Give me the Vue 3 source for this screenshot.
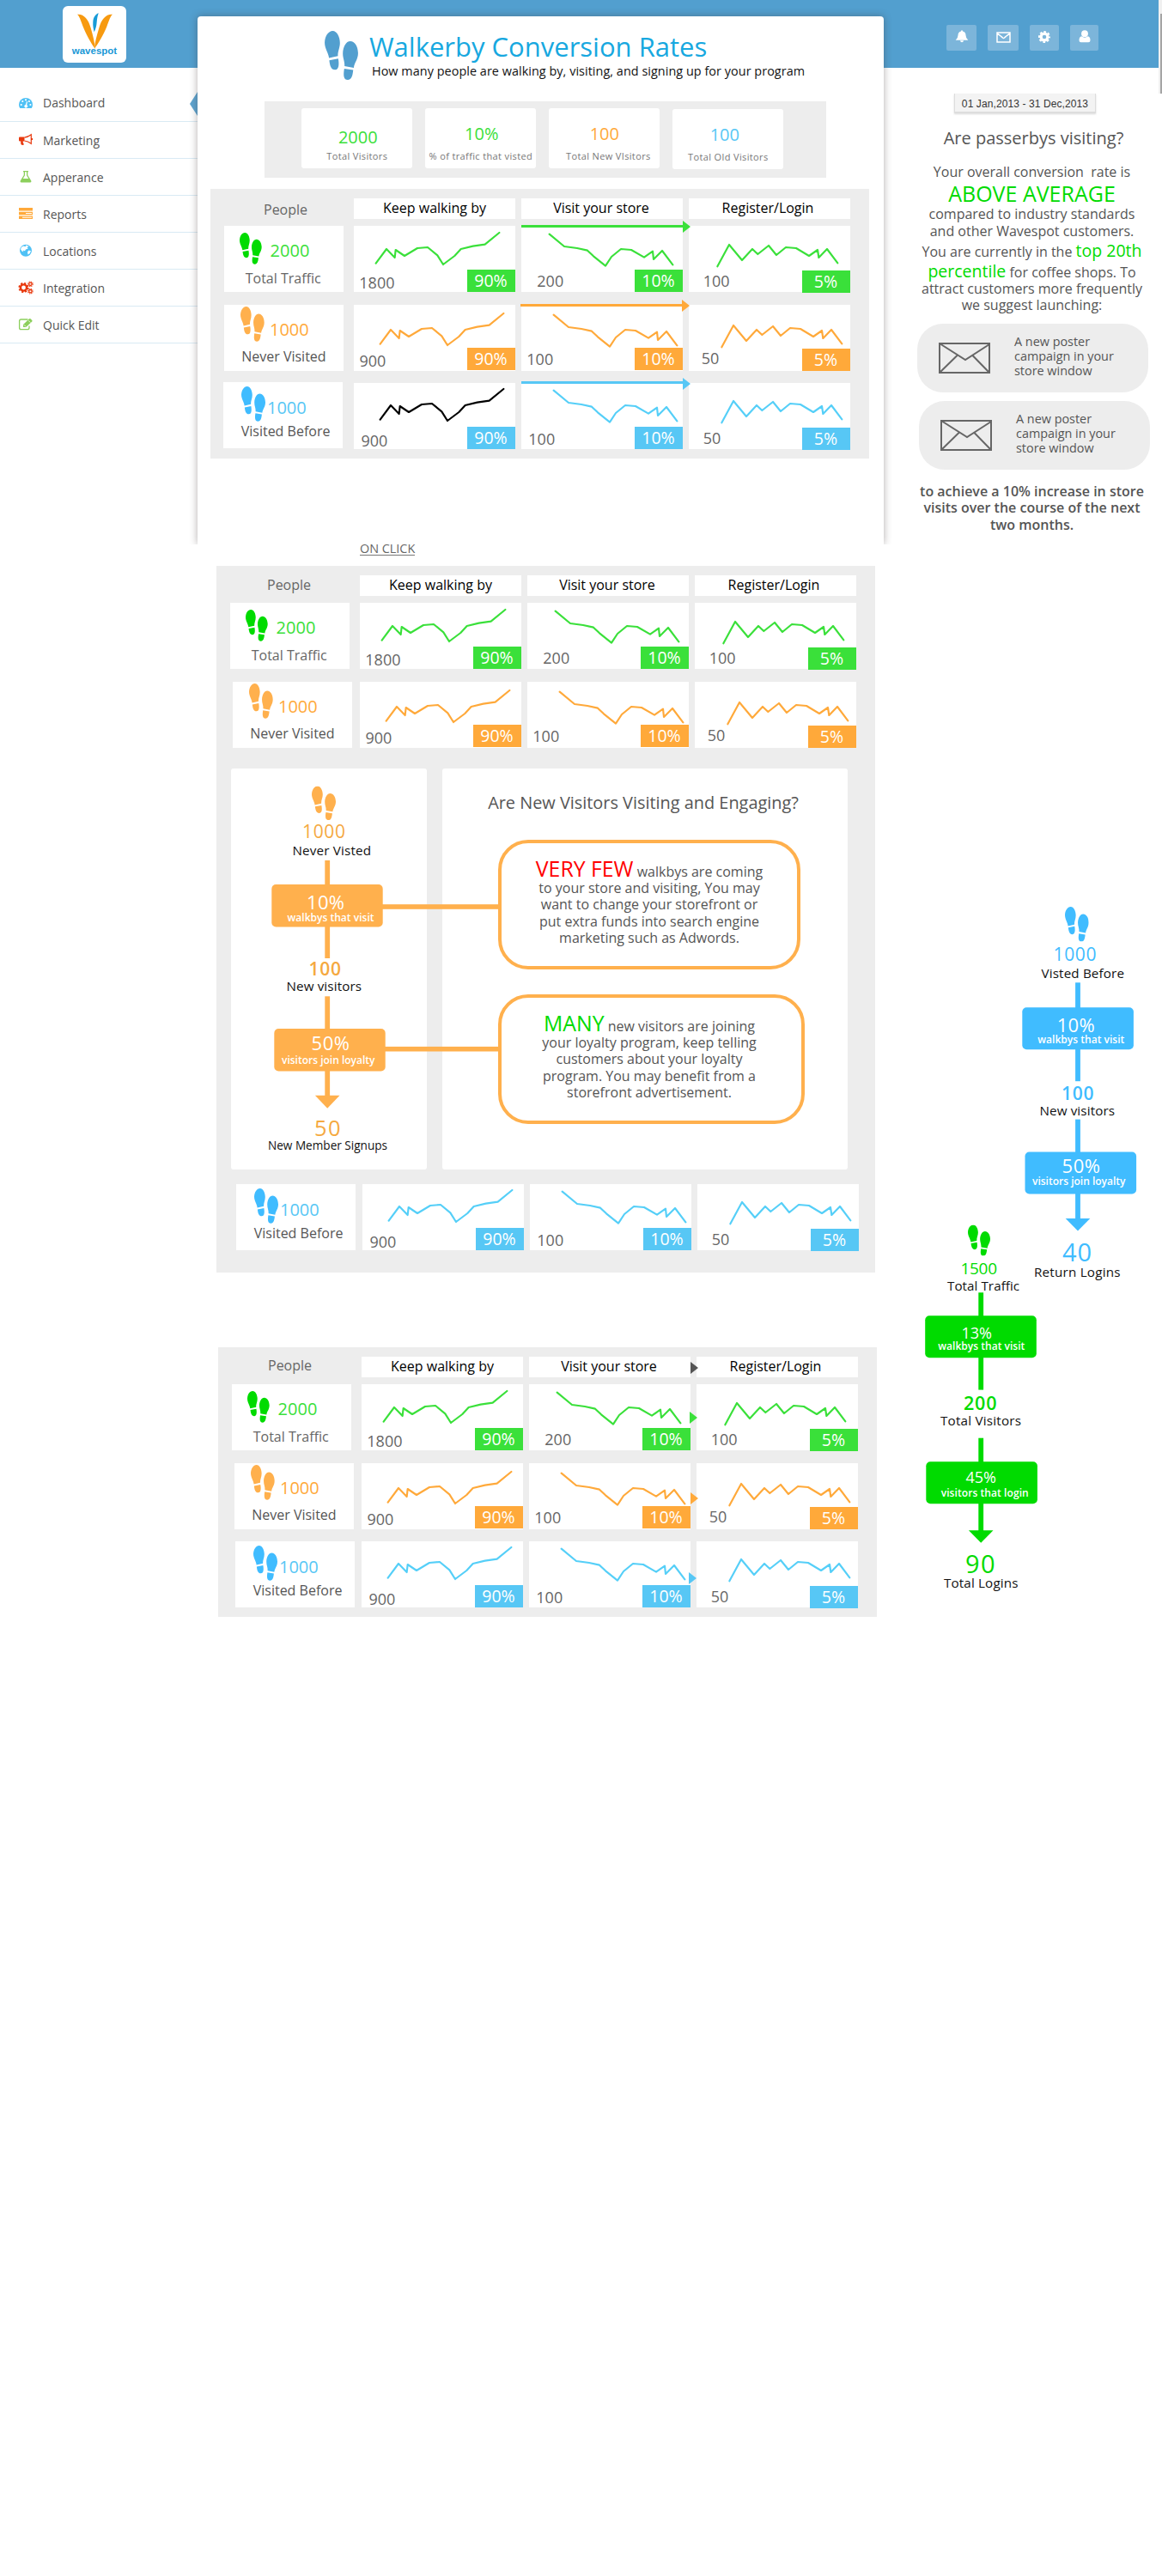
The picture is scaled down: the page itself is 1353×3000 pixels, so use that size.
<script setup>
const px = (n) => n + 'px'

const feetPath =
  'M28 0C42 0 53 20 53 42C53 60 45 70 46 87L15 94C13 75 0 62 0 40C1 18 12 1 28 0Z' +
  'M16 102L47 96C50 112 51 135 36 135C22 135 18 120 16 102Z' +
  'M89 36C104 37 115 52 116 77C116 100 103 110 101 128L69 122C70 105 63 96 63 78C64 55 74 36 89 36Z' +
  'M68 131L99 136C97 155 94 170 80 170C66 170 64 155 68 131Z'

const nav = [
  { label: 'Dashboard', icon: 'dash', color: '#4fc1f5' },
  { label: 'Marketing', icon: 'horn', color: '#e8380d' },
  { label: 'Apperance', icon: 'flask', color: '#8ccf5c' },
  { label: 'Reports', icon: 'tasks', color: '#ffa93a' },
  { label: 'Locations', icon: 'globe', color: '#4fc1f5' },
  { label: 'Integration', icon: 'cogs', color: '#e8380d' },
  { label: 'Quick Edit', icon: 'edit', color: '#8ccf5c' },
]

const stats = [
  { value: '2000', label: 'Total Visitors', color: '#3ae03a', top: 0, drop: 4, vx: 1, lx: 0 },
  { value: '10%', label: '% of traffic that visted', color: '#3ae03a', top: 0, drop: 0, vx: 1, lx: 0 },
  { value: '100', label: 'Total New VIsitors', color: '#ffa93a', top: 0, drop: 0, vx: 0, lx: 4.5 },
  { value: '100', label: 'Total Old Visitors', color: '#57c7f5', top: 1, drop: 0, vx: -4, lx: 0 },
]

const lines = [
  '77,131 114,81 143,111 146,84 177,105 222,78 258,75 292,103 312,135 352,105 374,81 416,71 458,65 508,24',
  '98,29 150,72 195,78 231,86 252,106 294,140 315,108 348,81 384,84 429,110 459,89 462,117 492,87 529,136',
  '100,142 141,66 186,120 222,81 241,99 279,69 306,102 339,75 375,78 420,105 450,84 454,111 483,81 520,130',
]

const green = {
  color: '#3ae03a', stroke: '#3ae03a', feet: '#00db00', ink: '#666',
  value: '2000', label: 'Total Traffic',
  fx: 18.3, fy: 8, fw: 25.7, fh: 36.7, vx: 53.6, vb: 36.7, lx: 24.7, lb: 67,
  dx: 0, dy: 0, badge: 51,
  cells: [
    { n: '1800', x: 6.3, b: 72.5, pct: '90%' },
    { n: '200', x: 18.3, b: 70.7, pct: '10%' },
    { n: '100', x: 16.7, b: 70.7, pct: '5%' },
  ],
}
const orange = {
  color: '#ffa93a', stroke: '#ffa93a', feet: '#ffb04d', ink: '#555',
  value: '1000', label: 'Never Visited',
  fx: 19, fy: 2, fw: 27.7, fh: 40.7, vx: 53, vb: 36.7, lx: 20.2, lb: 66,
  dx: 15, dy: 6, badge: 50,
  cells: [
    { n: '900', x: 6.5, b: 72, pct: '90%' },
    { n: '100', x: 6.3, b: 70, pct: '10%' },
    { n: '50', x: 14.7, b: 69, pct: '5%' },
  ],
}
const blue = {
  color: '#57c7f5', stroke: '#55cff8', feet: '#40bcff', ink: '#555',
  value: '1000', label: 'Visited Before',
  fx: 21, fy: 5, fw: 28, fh: 40.7, vx: 51, vb: 37.7, lx: 20.7, lb: 63,
  dx: 15, dy: -3, badge: 51,
  cells: [
    { n: '900', x: 8.5, b: 74, pct: '90%' },
    { n: '100', x: 8.3, b: 72, pct: '10%' },
    { n: '50', x: 16.7, b: 71, pct: '5%' },
  ],
}

const panels = [
  {
    id: 'overview', people: [62, 30],
    rows: [
      { ...green, top: 8, shift: 0, arrow: { x: 0, y: -1 } },
      { ...orange, top: 15, shift: 0, arrow: { x: -1, y: -1 } },
      { ...blue, top: 14, shift: -1, lift: -1, first: '#000', arrow: { x: 0, y: -2 } },
    ],
  },
  {
    id: 'expanded', people: [59, 28.3],
    rows: [
      { ...green, top: 8, shift: 0 },
      { ...orange, top: 15, shift: 3 },
      { ...blue, top: 17, shift: 4, indent: 3, detail: true },
    ],
  },
  {
    id: 'summary', people: [58, 27.3], pointer: true,
    rows: [
      { ...green, top: 8, shift: 0, tip: [-1, 32] },
      { ...orange, top: 15, shift: 3, tip: [0, 34] },
      { ...blue, top: 14, shift: 4, tip: [-2, 36] },
    ],
  },
]

const W = '#fff'
const K = '#111'
// text entries: x, baseline, text, length, size, weight, fill
const flowOrange = {
  color: '#ffb04d', cx: 381.2, feet: [363, 915.6, 28, 39.5],
  bars: [[1002, 1031], [1079, 1116], [1160.3, 1199], [1247, 1277]],
  boxes: [[316.3, 1030], [319.3, 1198]], tip: 1275.8,
  links: [[445, 1053.2, 137], [448, 1218.9, 134]],
  texts: [
    [352, 976.1, '1000', 50, 21, 400, '#f5a93f'],
    [340.5, 996.3, 'Never Visted', 91.5, 15.2, 400, K],
    [357, 1058.7, '10%', 44, 22, 400, W],
    [334.5, 1072.6, 'walkbys that visit', 101, 12, 600, W],
    [359.5, 1135.8, '100', 37.5, 21, 600, '#f5a93f'],
    [333.5, 1154, 'New visitors', 87.5, 15.2, 400, K],
    [362.5, 1223.2, '50%', 44.5, 22, 400, W],
    [328, 1238.6, 'visitors join loyalty', 108.5, 12, 600, W],
    [366, 1322.5, '50', 30.5, 25.5, 500, '#f5a93f'],
    [312, 1338.7, 'New Member Signups', 139, 13.6, 400, K],
  ],
}
const flowBlue = {
  color: '#40bcff', cx: 1255, feet: [1240, 1056, 27.7, 40.5],
  bars: [[1144.3, 1175], [1222, 1259.2], [1303.6, 1343], [1389, 1420]],
  boxes: [[1190.3, 1173.2], [1193.5, 1341.5]], tip: 1419,
  texts: [
    [1226.5, 1119.4, '1000', 50, 21, 400, '#40bcff'],
    [1212.5, 1139, 'Visted Before', 96.5, 15.2, 400, K],
    [1230.7, 1202, '10%', 44, 22, 400, W],
    [1208.3, 1214.9, 'walkbys that visit', 101, 12, 600, W],
    [1236, 1280.9, '100', 37.5, 21, 600, '#40bcff'],
    [1210.5, 1298.9, 'New visitors', 87.5, 15.2, 400, K],
    [1236.5, 1366, '50%', 44.5, 22, 400, W],
    [1202, 1380.4, 'visitors join loyalty', 108.5, 12, 600, W],
    [1237, 1468.8, '40', 34, 29, 500, '#40bcff'],
    [1204, 1486.8, 'Return Logins', 100.5, 15.2, 400, K],
  ],
}
const flowGreen = {
  color: '#00db00', cx: 1142.2, feet: [1127, 1426.4, 26, 36.2],
  bars: [[1505.3, 1534], [1580, 1618.6], [1674.7, 1704], [1750, 1784]],
  boxes: [[1077.2, 1532.2], [1078.3, 1702.3]], tip: 1782.3,
  texts: [
    [1118.5, 1483.6, '1500', 42.5, 19, 400, '#00db00'],
    [1103, 1502.7, 'Total Traffic', 84, 15.2, 400, K],
    [1119.5, 1558.8, '13%', 35.5, 18, 400, W],
    [1092.3, 1571.5, 'walkbys that visit', 101, 12, 600, W],
    [1122, 1642, '200', 38.5, 21.5, 600, '#00db00'],
    [1095, 1659.9, 'Total Visitors', 94, 15.2, 400, K],
    [1124.5, 1727, '45%', 35.5, 18, 400, W],
    [1095.7, 1742.5, 'visitors that login', 102, 12, 600, W],
    [1124, 1832, '90', 34.5, 29, 500, '#00db00'],
    [1099, 1849.4, 'Total Logins', 86.5, 15.2, 400, K],
  ],
}
const inner = { box: '269 895 228 467', flows: [flowOrange] }
const outer = { box: '1050 1040 303 830', flows: [flowBlue, flowGreen] }
</script>

<template>
  <div class="page">
    <section class="top">
      <nav class="side">
        <div class="logo">
          <svg width="41" height="42" viewBox="0 0 121 122">
            <path fill="#f79a10" d="M0 4C22 2 38 20 46 50C54 78 60 100 61 122C48 105 30 72 20 47C12 24 6 8 0 4Z" />
            <path fill="#f79a10" d="M121 4C99 2 83 20 75 50C67 78 60 100 59 122C72 105 91 72 101 47C109 24 115 8 121 4Z" />
            <path fill="#169bd8" d="M73 0C62 4 55 15 54 30C53 45 56 55 58 65C63 55 66 45 67 30C68 18 70 8 73 0Z" />
          </svg>
          <span>wavespot</span>
        </div>
        <ul>
          <li v-for="n in nav" :key="n.label">
            <svg width="18" height="16" viewBox="0 0 18 16" :style="{ color: n.color }">
              <g v-if="n.icon === 'dash'">
                <path fill="currentColor" d="M1 10A8 8 0 0 1 17 10Q17 12.400 15.800 14H2.200Q1 12.400 1 10Z" />
                <g fill="#fff"><circle cx="3.700" cy="10" r="1.100" /><circle cx="5.300" cy="6" r="1.100" /><circle cx="9" cy="4.300" r="1.100" /><circle cx="12.900" cy="6" r="1.100" /><circle cx="14.400" cy="10" r="1.100" /><path d="M10 6L11 6.300L10.200 10.200A1.800 1.800 0 1 1 8.800 10Z" /></g>
              </g>
              <g v-else-if="n.icon === 'horn'">
                <path fill="currentColor" d="M1 5.500Q1 4.500 2 4.500H7.500V9.500H5.600Q5.500 11 7 13.200Q5.500 14.500 3.800 13.600Q2.800 11.500 3.300 9.500H2Q1 9.500 1 8.500Z" />
                <path fill="none" stroke="currentColor" stroke-width="1.200" d="M7.500 5.100Q11.500 4.800 15.300 1.800V12.300Q11.500 9.200 7.500 9M16.500 6V8" />
              </g>
              <g v-else-if="n.icon === 'flask'">
                <path fill="currentColor" d="M6 1H12V2.300H11.300V6L15.300 12.500Q16 14.500 14.200 14.500H3.800Q2 14.500 2.700 12.500L6.700 6V2.300H6Z" />
                <path fill="#fff" d="M8 2.300H10V6.300L12.200 9.900H5.800L8 6.300Z" />
              </g>
              <g v-else-if="n.icon === 'tasks'" fill="currentColor">
                <path d="M1 1H17V4.400H1ZM1 5.800H17V9.200H1ZM1 10.600H17V14H1Z" />
                <path fill="#fff" d="M9 7H16V8H9ZM5 11.800H16V12.800H5Z" />
              </g>
              <g v-else-if="n.icon === 'globe'">
                <circle cx="9" cy="7.800" r="7" fill="currentColor" />
                <path fill="#fff" d="M9.500 1.500L12.500 3L10.500 4.200L11.800 5.500L9 6.600L8 8.200L5.500 7.400L6.400 9.500L4.500 8.600L3 6.300L4 3.700L6.500 2.500L8.500 3.200ZM12.500 7.500L15 8.300L13.500 11.200L11.500 12.500L11 9.500Z" />
              </g>
              <g v-else-if="n.icon === 'cogs'" fill="none" stroke="currentColor">
                <circle cx="6.500" cy="8" r="3.600" stroke-width="2.400" />
                <circle cx="6.500" cy="8" r="5.200" stroke-width="1.800" stroke-dasharray="2.200 1.884" />
                <circle cx="14.400" cy="3.800" r="1.700" stroke-width="1.300" />
                <circle cx="14.400" cy="3.800" r="2.800" stroke-width="1.100" stroke-dasharray="1.200 1" />
                <circle cx="14.400" cy="12.200" r="1.700" stroke-width="1.300" />
                <circle cx="14.400" cy="12.200" r="2.800" stroke-width="1.100" stroke-dasharray="1.200 1" />
              </g>
              <g v-else>
                <path fill="none" stroke="currentColor" stroke-width="1.300" d="M11.500 2H3.500Q1.600 2 1.600 4V11.700Q1.600 13.700 3.500 13.700H11Q13 13.700 13 11.700V9.500" />
                <path fill="currentColor" d="M6 11V8L13 1.300Q13.800 .6 14.600 1.300L16.300 3Q17 3.700 16.300 4.500L9.300 11Z" />
                <path stroke="#fff" stroke-width=".8" d="M12 3.200L14.300 5.500M7 8.300L9 10.300" />
              </g>
            </svg>
            <span>{{ n.label }}</span>
            <i v-if="n.icon === 'dash'" class="active"></i>
          </li>
        </ul>
      </nav>

      <main class="sheet">
        <header class="title">
          <svg class="feet" width="39" height="57" viewBox="0 0 116 170"><path :d="feetPath" fill="#529fcf" /></svg>
          <div>
            <h1>Walkerby Conversion Rates</h1>
            <p>How many people are walking by, visiting, and signing up for your program</p>
          </div>
        </header>
        <div class="stats">
          <div v-for="s in stats" :key="s.label" class="stat" :style="{ marginTop: px(s.top) }">
            <b :style="{ color: s.color, paddingTop: px(s.drop), marginLeft: px(s.vx * 2) }">{{ s.value }}</b>
            <span :style="{ marginTop: px(-s.drop), marginLeft: px(s.lx * 2) }">{{ s.label }}</span>
          </div>
        </div>
      </main>

      <aside class="advice">
        <div class="tools">
          <span class="t1"><svg width="16" height="15" viewBox="0 0 16 15"><path fill="#fff" d="M8 .3Q9 .3 9 1.500Q12.400 2.300 12.500 6Q12.600 9.500 15.300 11.800H.7Q3.400 9.500 3.500 6Q3.600 2.300 7 1.500Q7 .3 8 .3ZM6 12.300H10Q9.800 14.300 8 14.300Q6.200 14.300 6 12.300Z" /></svg></span>
          <span class="t2"><svg width="17" height="13" viewBox="0 0 17 13"><path fill="none" stroke="#fff" stroke-width="1.500" d="M1 1H16V12H1ZM1.300 2.200Q6 5.500 7.500 7Q8.500 7.800 9.500 7Q11 5.500 15.700 2.200" /></svg></span>
          <span class="t3"><svg width="16" height="16" viewBox="0 0 16 16"><g fill="none" stroke="#fff"><circle cx="8" cy="8" r="3.900" stroke-width="3.200" /><circle cx="8" cy="8" r="6" stroke-width="2" stroke-dasharray="2.700 2.012" stroke-dashoffset="1.350" /></g></svg></span>
          <span class="t4"><svg width="14" height="15" viewBox="0 0 14 15"><circle cx="7" cy="4.200" r="3.900" fill="#fff" /><path fill="#fff" d="M3.300 7.300Q7 10 10.700 7.300Q13.500 7.800 13.500 12Q13.500 14.300 11.300 14.300H2.700Q.5 14.300 .5 12Q.5 7.800 3.300 7.300Z" /></svg></span>
        </div>
        <div class="date">01 Jan,2013 - 31 Dec,2013</div>
        <h2>Are passerbys visiting?</h2>
        <div class="copy">
          <p>Your overall conversion&nbsp; rate is</p>
          <p class="g10"><em class="xl">ABOVE AVERAGE</em></p>
          <p>compared to industry standards</p>
          <p>and other Wavespot customers.</p>
          <p class="g4">You are currently in the <em>top 20th</em></p>
          <p class="g4"><em>percentile</em> for coffee shops. To</p>
          <p class="tight">attract customers more frequently</p>
          <p class="tight">we suggest launching:</p>
        </div>
        <div v-for="k in 2" :key="k" class="pill" :class="'pill' + k">
          <svg width="60" height="36" viewBox="0 0 60 36"><path fill="none" stroke="#666" stroke-width="2" d="M1 1H59V35H1ZM1 1L31 20L59 2M1 35L22 14.500M39 14.500L59 35" /></svg>
          <div>A new poster<br />campaign in your<br />store window</div>
        </div>
        <div class="goal">to achieve a 10% increase in store<br />visits over the course of the next<br />two months.</div>
      </aside>
      <div class="scroll"><i></i></div>
    </section>

    <div class="onclick"><span>ON CLICK</span></div>

    <section v-for="p in panels" :key="p.id" class="panel" :class="p.id">
      <div class="heads">
        <div class="people" :style="{ paddingLeft: px(p.people[0] - 16), paddingTop: px(p.people[1] - 27.2) }">People</div>
        <div class="head">Keep walking by</div>
        <div class="head mid">Visit your store<i v-if="p.pointer" class="tip dark"></i></div>
        <div class="head last">Register/Login</div>
      </div>
      <template v-for="r in p.rows" :key="r.label">
        <div v-if="r.detail" class="detail">
          <div class="flowcard">
            <svg class="flow" width="228" height="467" :viewBox="inner.box">
              <g v-for="(f, i) in inner.flows" :key="i">
                <svg :x="f.feet[0]" :y="f.feet[1]" :width="f.feet[2]" :height="f.feet[3]" viewBox="0 0 116 170" preserveAspectRatio="none"><path :d="feetPath" :fill="f.color" /></svg>
                <rect v-for="b in f.bars" :key="b[0]" :x="f.cx - 2.900" :y="b[0]" width="5.800" :height="b[1] - b[0]" :fill="f.color" />
                <rect v-for="b in f.boxes" :key="b[1]" :x="b[0]" :y="b[1]" width="129.400" height="49.500" rx="5" :fill="f.color" />
                <rect v-for="l in f.links" :key="l[1]" :x="l[0]" :y="l[1]" :width="l[2]" height="5.600" :fill="f.color" />
                <path :d="`M${f.cx - 14.300} ${f.tip}h28.600l-14.300 15z`" :fill="f.color" />
                <text v-for="t in f.texts" :key="t[1]" :x="t[0]" :y="t[1]" :textLength="t[3]" :font-size="t[4]" :font-weight="t[5]" :fill="t[6]">{{ t[2] }}</text>
              </g>
            </svg>
          </div>
          <div class="answers">
            <h3>Are New Visitors Visiting and Engaging?</h3>
            <div class="bubble b1"><em class="red">VERY FEW</em> walkbys are coming<br />to your store and visiting, You may<br />want to change your storefront or<br />put extra funds into search engine<br />marketing such as Adwords.</div>
            <div class="bubble b2"><em>MANY</em> new visitors are joining<br />your loyalty program, keep telling<br />customers about your loyalty<br />program. You may benefit from a<br />storefront advertisement.</div>
          </div>
        </div>
        <div class="row" :style="{ marginTop: px(r.top), paddingLeft: px(16 + (r.indent || 0)) }">
          <div class="who" :style="{ marginLeft: px(r.shift), marginRight: px(12 - r.shift), marginTop: px(r.lift || 0), color: r.color }">
            <div class="line">
              <svg :width="r.fw" :height="r.fh" viewBox="0 0 116 170" preserveAspectRatio="none" :style="{ marginLeft: px(r.fx), marginTop: px(r.fy) }"><path :d="feetPath" :fill="r.feet" /></svg>
              <b :style="{ marginLeft: px(r.vx - r.fx - r.fw), marginTop: px(r.vb - 19.8) }">{{ r.value }}</b>
            </div>
            <span :style="{ marginLeft: px(r.lx), marginTop: px(r.lb - 66.2), color: r.ink }">{{ r.label }}</span>
          </div>
          <div v-for="(c, i) in r.cells" :key="i" class="cell">
            <svg class="spark" width="188" height="77" viewBox="0 0 564 231">
              <polyline :points="lines[i]" :transform="`translate(${r.dx} ${r.dy})`" fill="none" :stroke="(i === 0 && r.first) || r.stroke" stroke-width="6.500" stroke-linejoin="round" stroke-linecap="round" />
            </svg>
            <span class="num" :style="{ marginLeft: px(c.x), marginTop: px(c.b - 17) }">{{ c.n }}</span>
            <span class="badge" :style="{ top: px(r.badge + (i === 2 ? 1 : 0)), background: r.color }">{{ c.pct }}</span>
            <div v-if="i === 1 && r.arrow" class="arrow" :style="{ left: px(r.arrow.x), top: px(r.arrow.y), background: r.color }"></div>
            <i v-if="i === 1 && r.arrow" class="tip" :style="{ left: px(188 + r.arrow.x), top: '-6px', background: r.color }"></i>
            <i v-if="i === 1 && r.tip" class="tip" :style="{ left: px(188 + r.tip[0]), top: px(r.tip[1]), background: r.color }"></i>
          </div>
        </div>
      </template>
    </section>

    <svg class="sideflow" width="303" height="830" :viewBox="outer.box">
      <g v-for="(f, i) in outer.flows" :key="i">
        <svg :x="f.feet[0]" :y="f.feet[1]" :width="f.feet[2]" :height="f.feet[3]" viewBox="0 0 116 170" preserveAspectRatio="none"><path :d="feetPath" :fill="f.color" /></svg>
        <rect v-for="b in f.bars" :key="b[0]" :x="f.cx - 2.900" :y="b[0]" width="5.800" :height="b[1] - b[0]" :fill="f.color" />
        <rect v-for="b in f.boxes" :key="b[1]" :x="b[0]" :y="b[1]" width="129.600" height="49" rx="5" :fill="f.color" />
        <path :d="`M${f.cx - 14.300} ${f.tip}h28.600l-14.300 14.500z`" :fill="f.color" />
        <text v-for="t in f.texts" :key="t[1]" :x="t[0]" :y="t[1]" :textLength="t[3]" :font-size="t[4]" :font-weight="t[5]" :fill="t[6]">{{ t[2] }}</text>
      </g>
    </svg>
  </div>
</template>

<style>
body { background: #fff; }
</style>

<style scoped>
.page {
  display: grid;
  grid-template-columns: 1050px 303px;
  grid-template-rows: 634px 25px 823px 87px 314px;
  width: 1353px;
  height: 3000px;
  overflow: hidden;
  font-family: "Open Sans", sans-serif;
  color: #555;
  background: #fff;
}
.page * { box-sizing: border-box; }
h1, h2, h3, p, ul { margin: 0; padding: 0; font-weight: 400; }
em { font-style: normal; color: #00db00; line-height: 0; }
b { font-weight: 400; }
svg { display: block; flex: none; }
.top {
  grid-column: 1 / 3;
  grid-row: 1;
  display: flex;
  background: linear-gradient(#529fcf, #529fcf) 0 0 / 1349px 79px no-repeat;
}
.side { width: 230px; }
.logo {
  width: 74px; height: 66px; margin: 7px 0 25px 73px; padding-top: 8px;
  border-radius: 6px; background: #fff;
  display: flex; flex-direction: column; align-items: center;
}
.logo span { font: bold 11.500px/11px "Liberation Sans", sans-serif; color: #1a98d6; margin-top: -3px; }
.side ul { list-style: none; }
.side li {
  position: relative; display: flex; align-items: center; height: 43px;
  padding-left: 21px; border-bottom: 1px solid #d9eaf4; font-size: 14px;
}
.side li:first-child { height: 44px; }
.side li span { margin-left: 11px; }
.active {
  position: absolute; right: 0; top: 9px; width: 9px; height: 28px;
  background: #5fa5d0; clip-path: polygon(100% 0, 100% 100%, 0 50%);
}
.sheet {
  width: 799px; height: 615px; margin-top: 19px; background: #fff;
  border-radius: 4px 4px 0 0; box-shadow: 0 0 10px rgba(60, 50, 50, .4);
  clip-path: inset(-12px -12px 0 -12px);
}
.title { display: flex; padding: 17px 0 0 148px; height: 99px; }
.title h1 { font-size: 31px; line-height: 40px; margin: -2px 0 0 13px; color: #17a8e0; white-space: nowrap; }
.title p { font-size: 14.400px; line-height: 20px; letter-spacing: .05px; margin: -1px 0 0 16px; color: #111; white-space: nowrap; }
.stats { display: flex; width: 654px; height: 89px; margin-left: 78px; padding: 8px 0 0 43.300px; background: #ededed; }
.stat {
  width: 129px; height: 70px; margin-right: 15px; background: #fff; border-radius: 3px; flex: none;
  display: flex; flex-direction: column; align-items: center;
}
.stat b { font-size: 20px; line-height: 24px; margin-top: 18px; }
.stat span { font-size: 11px; line-height: 14px; letter-spacing: .36px; white-space: nowrap; color: #777; transform: translateY(7px); }
.advice { width: 320px; padding-left: 39px; }
.tools { display: flex; padding: 29px 0 0 34px; height: 109px; }
.tools span { height: 30px; background: #7cb5da; border-radius: 2px; display: flex; justify-content: center; padding-top: 6px; }
.t1 { width: 35px; margin-right: 13px; }
.tools .t2 { width: 36px; margin-right: 13px; padding-top: 8px; }
.t3 { width: 34px; margin-right: 13px; }
.t4 { width: 33px; }
.date {
  width: 165px; height: 22.500px; margin-left: 43px; background: #f3f3f3; border: solid #ddd; border-width: 0 1px 2px;
  font: 12px/24px "Liberation Sans", sans-serif; letter-spacing: .1px; color: #333; text-align: center; white-space: nowrap;
  box-shadow: 0 1px 2px rgba(0, 0, 0, .15);
}
.advice h2 { font-size: 20px; line-height: 28px; margin-top: 15.700px; width: 271px; text-align: center; }
.copy { width: 267px; margin-top: 14.700px; text-align: center; font-size: 16px; height: 187.200px; }
.copy p { line-height: 20px; height: 20px; white-space: nowrap; }
.copy em { font-size: 19.500px; }
.copy .xl { font-size: 25px; }
.copy .g10 { margin-top: 9.400px; }
.copy .g4 { margin-top: 3.900px; }
.copy .tight { margin-top: -.8px; }
.pill { width: 269px; height: 80px; border-radius: 30px; background: #ededed; display: flex; padding: 21.500px 0 0 25px; }
.pill div { margin: -8.200px 0 0 28px; font-size: 14.400px; line-height: 16.800px; }
.pill2 { margin: 10px 0 0 2px; }
.goal { width: 267px; margin-top: 15.800px; font-size: 16px; line-height: 19.600px; font-weight: 600; text-align: center; white-space: nowrap; }
.scroll { width: 4px; height: 109px; background: #f0f0f0; padding: 16px 0 0 2px; }
.scroll i { display: block; height: 93px; background: #a5a5a5; }
.onclick { grid-column: 1; grid-row: 2; padding-left: 419px; }
.onclick span { display: inline-block; font-size: 14.400px; line-height: 10px; height: 13px; padding-bottom: 0; border-bottom: 1px solid #777; color: #666; white-space: nowrap; vertical-align: top; }

.panel { width: 767px; height: 314px; background: #ededed; padding-top: 11px; }
.overview { grid-column: 1; grid-row: 1; margin: 220px 0 0 245px; position: relative; }
.expanded { grid-column: 1; grid-row: 3; margin-left: 252px; height: 823px; }
.summary { grid-column: 1; grid-row: 5; margin: 0 0 0 254px; }
.heads { display: flex; padding-left: 16px; height: 24px; }
.people { width: 151px; font-size: 16px; line-height: 20px; color: #666; }
.head { position: relative; width: 188px; margin-right: 7px; background: #fff; color: #000; font-size: 16px; line-height: 22px; text-align: center; }
.mid { padding-right: 2px; }
.last { padding-right: 4px; }
.row { display: flex; height: 77px; }
.who { width: 139px; height: 77px; background: #fff; display: flex; flex-direction: column; flex: none; }
.line { display: flex; height: 50px; align-items: flex-start; }
.who b { font-size: 20px; line-height: 24px; }
.who span { font-size: 16px; line-height: 20px; white-space: nowrap; }
.cell { position: relative; width: 188px; height: 77px; margin-right: 7px; background: #fff; display: flex; align-items: flex-start; flex: none; }
.spark { position: absolute; left: 0; top: 0; }
.num { font-size: 18px; line-height: 20px; color: #666; position: relative; }
.badge { position: absolute; right: 0; width: 56px; height: 26px; padding-right: 1px; font-size: 19.500px; line-height: 25px; color: #fff; text-align: center; }
.arrow { position: absolute; width: 188px; height: 3px; }
.tip { position: absolute; z-index: 1; width: 9px; height: 14px; clip-path: polygon(0 0, 100% 50%, 0 100%); }
.dark { left: 188px; top: 6px; background: #555; }
.detail { display: flex; height: 467px; margin: 24px 0 0 17px; }
.flowcard { width: 228px; margin-right: 18px; background: #fff; border-radius: 3px; position: relative; z-index: 1; }
.flow { overflow: visible; }
.answers { width: 472px; background: #fff; border-radius: 3px; padding-top: 27px; }
.answers h3 { font-size: 19.900px; line-height: 26px; text-align: center; width: 468px; }
.bubble { border: 4px solid #ffb04d; border-radius: 35px; width: 352px; height: 151px; margin: 30px 0 0 65px; padding-top: 23.500px; font-size: 16px; line-height: 19.400px; text-align: center; white-space: nowrap; }
.bubble em { font-size: 24.800px; }
.bubble .red { color: #f00; }
.bubble.b2 { width: 357px; margin-top: 29px; border-width: 4.500px; padding-right: 5px; }
.sideflow { grid-column: 2; grid-row: 3 / 6; margin-top: 381px; height: 830px; }
</style>
